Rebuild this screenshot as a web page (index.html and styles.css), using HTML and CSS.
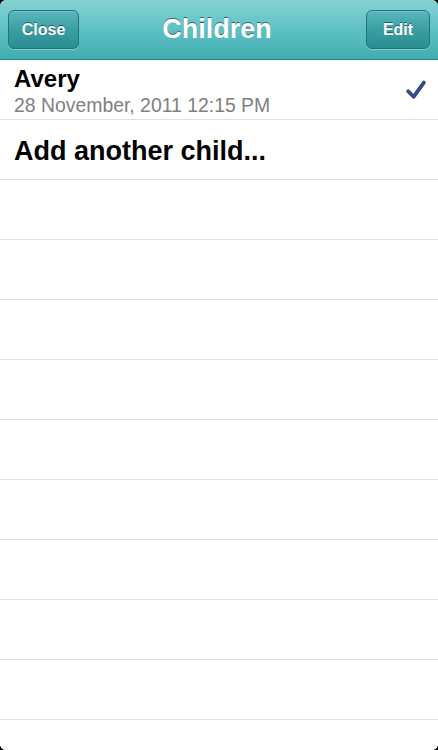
FILE: index.html
```html
<!DOCTYPE html>
<html>
<head>
<meta charset="utf-8">
<link rel="stylesheet" href="styles.css">
</head>
<body>
<div class="screen">
  <header class="navbar">
    <button class="nav-btn close-btn">Close</button>
    <h1 class="nav-title">Children</h1>
    <button class="nav-btn edit-btn">Edit</button>
  </header>
  <ul class="list">
    <li class="row child-row">
      <div class="child-info">
        <div class="child-name">Avery</div>
        <div class="child-date">28 November, 2011 12:15 PM</div>
      </div>
      <svg class="check" width="20" height="20" viewBox="0 0 20 20"><path d="M2.2 11.2 L7.6 16.8 L17.8 2.6" fill="none" stroke="#324d82" stroke-width="3.8" stroke-linecap="round" stroke-linejoin="round"/></svg>
    </li>
    <li class="row add-row">Add another child...</li>
    <li class="row"></li>
    <li class="row"></li>
    <li class="row"></li>
    <li class="row"></li>
    <li class="row"></li>
    <li class="row"></li>
    <li class="row"></li>
    <li class="row"></li>
    <li class="row"></li>
    <li class="row"></li>
  </ul>
  <div class="corner tl"></div>
  <div class="corner tr"></div>
  <div class="corner bl"></div>
  <div class="corner br"></div>
</div>
</body>
</html>
```
FILE: styles.css
```css
html, body {
  margin: 0;
  padding: 0;
  background: #fff;
}
body {
  font-family: "Liberation Sans", Arial, sans-serif;
  width: 438px;
  height: 750px;
  overflow: hidden;
}
.screen {
  position: relative;
  width: 438px;
  height: 750px;
  overflow: hidden;
}
.navbar {
  height: 59px;
  border-bottom: 1px solid #2c8286;
  background: linear-gradient(to bottom, #86d3d4 0%, #62c2c5 45%, #40aeb2 100%);
  display: grid;
  grid-template-columns: 1fr auto 1fr;
  align-items: center;
  padding: 0 8px;
}
.nav-btn {
  height: 39px;
  border: 1px solid #237479;
  border-radius: 6px;
  background: linear-gradient(to bottom, #5ab8bc 0%, #3a9ea3 50%, #2a8d92 100%);
  color: #fff;
  font-family: "Liberation Sans", Arial, sans-serif;
  font-weight: bold;
  font-size: 16px;
  text-shadow: 0 -1px 0 rgba(0,0,0,0.45);
  box-shadow: 0 1px 0 rgba(255,255,255,0.3), inset 0 1px 0 rgba(255,255,255,0.15);
  padding: 0;
}
.close-btn { width: 71px; justify-self: start; }
.edit-btn { width: 64px; justify-self: end; }
.nav-title {
  margin: 0;
  color: #fff;
  font-size: 27px;
  font-weight: bold;
  text-shadow: 0 -1px 0 rgba(0,0,0,0.5);
  position: relative;
  left: -2px;
}
.list {
  list-style: none;
  margin: 0;
  padding: 0;
}
.row {
  height: 59px;
  border-bottom: 1px solid #dedede;
  display: flex;
  align-items: center;
  padding: 0 14px;
}
.child-row {
  justify-content: space-between;
  padding-right: 12px;
}
.child-info {
  padding-top: 4px;
}
.child-name {
  font-weight: bold;
  font-size: 24px;
  color: #000;
  line-height: 26px;
  margin-top: -2px;
}
.child-date {
  font-size: 19.4px;
  color: #808080;
  line-height: 22px;
  margin-top: 2px;
}
.check {
  margin-top: 0;
}
.add-row {
  font-weight: bold;
  font-size: 27px;
  color: #000;
  padding-top: 3px;
  height: 56px;
}
.corner {
  position: absolute;
  width: 5px;
  height: 5px;
}
.corner.tl { top: 0; left: 0; background: radial-gradient(circle at 100% 100%, transparent 4.5px, #000 5px); }
.corner.tr { top: 0; right: 0; background: radial-gradient(circle at 0% 100%, transparent 4.5px, #000 5px); }
.corner.bl { bottom: 0; left: 0; background: radial-gradient(circle at 100% 0%, transparent 4.5px, #000 5px); }
.corner.br { bottom: 0; right: 0; background: radial-gradient(circle at 0% 0%, transparent 4.5px, #000 5px); }
```
